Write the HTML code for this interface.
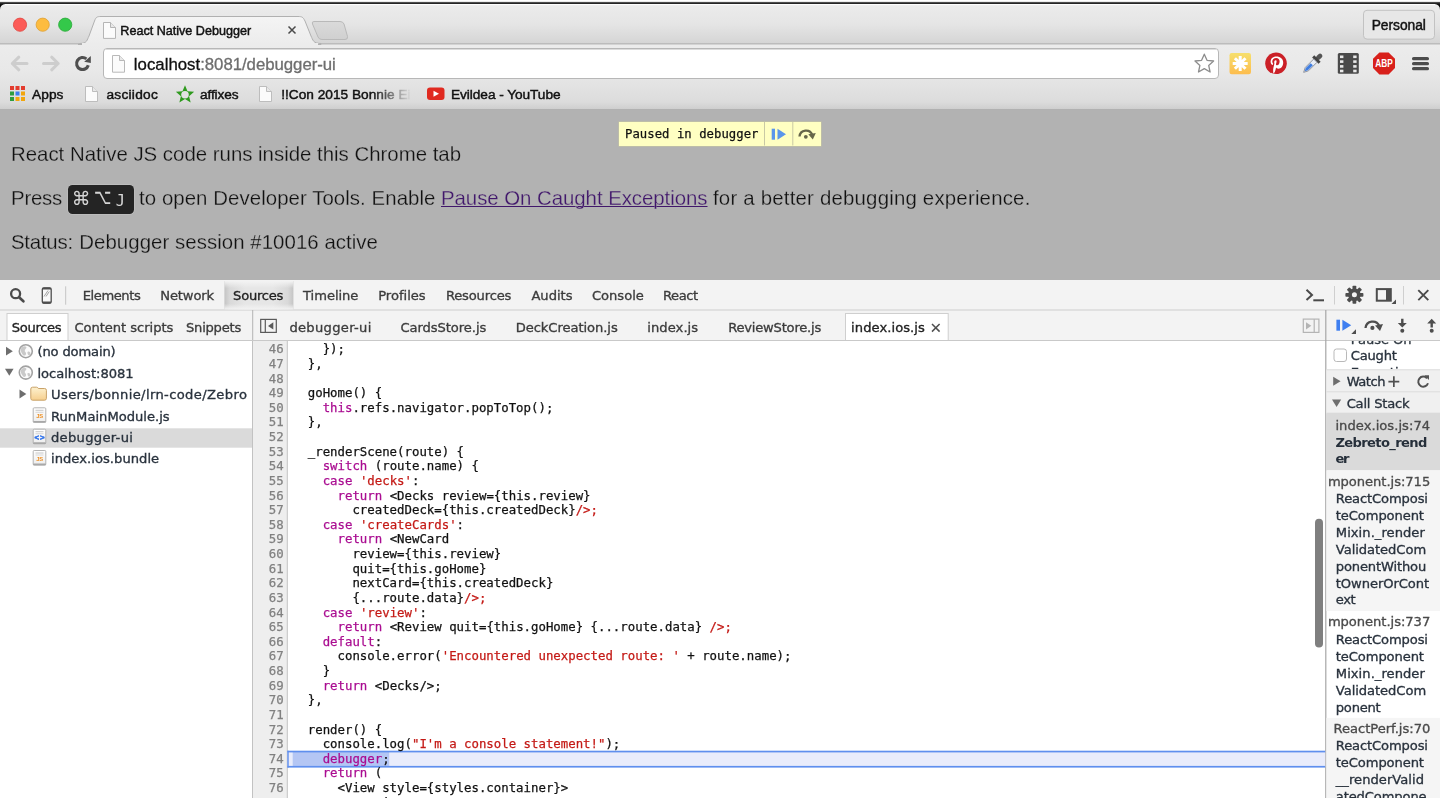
<!DOCTYPE html>
<html>
<head>
<meta charset="utf-8">
<title>React Native Debugger</title>
<style>
html,body{margin:0;padding:0;}

body{width:1440px;height:798px;overflow:hidden;position:relative;background:#b2b2b2;font-family:"Liberation Sans",sans-serif;}
.abs{position:absolute;}
#chrome{position:absolute;left:0;top:0;width:1440px;height:110px;background:linear-gradient(#fff 0,#fff 1.400px,#5a5a5a 2.200px,#2e2e2e 3.200px,#151515 4px,#000 6px);}
#chromebg{position:absolute;left:0;top:3.700px;width:1440px;height:106.300px;border-radius:5.500px 5.500px 0 0;
 background:linear-gradient(#fdfdfd 0,#fbfbfb 1px,#ebebeb 1.600px,#e5e5e5 20px,#d5d5d5 39.300px,#ececec 40.300px,#e8e8e8 68px,#dcdcdc 98px,#cfcfcf 104.800px,#a4a4a4 105.800px);}
.ui{font-family:"DejaVu Sans","Liberation Sans",sans-serif;-webkit-text-stroke:0.330px currentColor;}
.sn{font-family:"Liberation Sans",sans-serif;}
.mono{font-family:"DejaVu Sans Mono","Liberation Mono",monospace;-webkit-text-stroke:0.250px currentColor;}
.t{position:absolute;white-space:pre;}
#txt{position:absolute;left:0;top:0;width:1440px;height:798px;will-change:transform;}
.k{color:#aa0d91}.s{color:#c41a16}
#code{position:absolute;left:292.900px;top:342.300px;font-size:12.370px;line-height:14.630px;color:#111;white-space:pre;margin:0;}
#nums{position:absolute;left:253px;top:342.300px;width:30.700px;text-align:right;font-size:12.370px;line-height:14.630px;color:#808080;white-space:pre;margin:0;}
</style>
</head>
<body>
<div id="chrome"><div id="chromebg"></div></div>
<!-- tab strip -->
<svg class="abs" style="left:0;top:0" width="1440" height="110" viewBox="0 0 1440 110">
 <defs>
  <linearGradient id="tabg" x1="0" y1="0" x2="0" y2="1"><stop offset="0" stop-color="#f4f4f4"/><stop offset="1" stop-color="#ececec"/></linearGradient>
  <linearGradient id="yelg" x1="0" y1="0" x2="0" y2="1"><stop offset="0" stop-color="#f6df6c"/><stop offset="1" stop-color="#fdbd4e"/></linearGradient>
  <linearGradient id="ntg" x1="0" y1="0" x2="0" y2="1"><stop offset="0" stop-color="#dadada"/><stop offset="1" stop-color="#d0d0d0"/></linearGradient>
 </defs>
 <!-- toolbar top line -->
 <rect x="0" y="43.300" width="1440" height="1.100" fill="#b0b0b0"/>
 <!-- new tab button -->
 <path d="M314 21.5 H340 Q343 21.5 344 24 L347.500 36.500 Q348 39.500 345 39.500 H322 Q319 39.500 318 37 L312.500 24 Q311.500 21.500 314 21.500Z" fill="url(#ntg)" stroke="#b9b9b9" stroke-width="1"/>
 <!-- active tab -->
 <path d="M80 43.500 C87 43.500 87 40 89 36 L94.500 21 C96 17 97 16.500 101 16.500 H298 C302 16.500 303 17 305 21 L311 36 C313 40 313 43.500 321 43.500 V44.500 H78Z" fill="url(#tabg)" stroke="#b0b0b0" stroke-width="1"/>
 <rect x="82" y="43" width="236" height="2" fill="#ececec"/>
 <!-- traffic lights -->
 <circle cx="20" cy="24.700" r="6.600" fill="#fc5b57" stroke="#e0443e" stroke-width="0.800"/>
 <circle cx="42.700" cy="24.700" r="6.600" fill="#fdbc40" stroke="#dea032" stroke-width="0.800"/>
 <circle cx="65.200" cy="24.700" r="6.600" fill="#34c84a" stroke="#27aa35" stroke-width="0.800"/>
 <!-- tab favicon (page) -->
 <g id="pg1" transform="translate(103,22)"><path d="M0.500 0.500 H7.500 L12.500 5.500 V16.400 H0.500Z" fill="#fbfbfb" stroke="#b5b5b5"/><path d="M7.500 0.500 V5.500 H12.500" fill="#e8e8e8" stroke="#b5b5b5"/></g>
 <!-- tab close -->
 <path d="M288.500 26.500 L295.500 33.500 M295.500 26.500 L288.500 33.500" stroke="#4a4a4a" stroke-width="1.500" fill="none"/>
 <!-- back / forward / reload -->
 <path d="M12.300 63.500 H27 M18.800 57.200 L12.300 63.500 L18.800 69.800" stroke="#cdcdcd" stroke-width="3" fill="none" stroke-linecap="round" stroke-linejoin="round"/>
 <path d="M43.500 63.500 H58.200 M51.700 57.200 L58.200 63.500 L51.700 69.800" stroke="#cdcdcd" stroke-width="3" fill="none" stroke-linecap="round" stroke-linejoin="round"/>
 <path d="M86.400 58.900 A6 6 0 1 0 88.300 65.300" stroke="#4f4f4f" stroke-width="3.100" fill="none"/>
 <path d="M84.200 61.800 L90.800 56 V62.900Z" fill="#4f4f4f"/>
 <!-- omnibox -->
 <rect x="103.500" y="48.500" width="1115" height="30" rx="3.500" fill="#fff" stroke="#b7b7b7"/>
 <rect x="105" y="49" width="1112" height="1" fill="#dcdcdc"/>
 <g transform="translate(112,55)"><path d="M0.500 0.500 H7.500 L12.500 5.500 V17.200 H0.500Z" fill="#fbfbfb" stroke="#b9b9b9"/><path d="M7.500 0.500 V5.500 H12.500" fill="#e8e8e8" stroke="#b9b9b9"/></g>
 <!-- star -->
 <path d="M1204.300 54.200 L1207 60.300 L1213.600 61 L1208.700 65.400 L1210.100 72 L1204.300 68.600 L1198.500 72 L1199.900 65.400 L1195 61 L1201.600 60.300Z" fill="#fff" stroke="#8d8d8d" stroke-width="1.300" stroke-linejoin="round"/>
 <!-- ext: yellow asterisk -->
 <rect x="1229.500" y="53" width="21.500" height="21.200" rx="2.200" fill="url(#yelg)"/>
 <g stroke="#fff" stroke-width="3" stroke-linecap="butt"><path d="M1240.200 56 V71 M1232.700 63.500 H1247.700 M1234.900 58.200 L1245.500 68.800 M1245.500 58.200 L1234.900 68.800"/></g><circle cx="1240.200" cy="63.500" r="3.400" fill="#fff"/>
 <!-- ext: pinterest -->
 <circle cx="1276" cy="63.300" r="10.800" fill="#cb2027"/>
 <path d="M1276.400 56.500 C1272.600 56.500 1270.600 59 1270.600 61.700 C1270.600 63 1271.300 64.500 1272.400 65 C1272.700 65.100 1272.800 64.900 1272.800 64.700 L1273.100 63.700 C1272.500 63 1272.300 62.400 1272.300 61.600 C1272.300 59.600 1273.800 58 1276.200 58 C1278.300 58 1279.600 59.300 1279.600 61.200 C1279.600 63.600 1278.500 65.300 1277.100 65.300 C1276.300 65.300 1275.800 64.700 1276 63.900 C1276.200 63 1276.600 62 1276.600 61.400 C1276.600 60.800 1276.300 60.300 1275.600 60.300 C1274.800 60.300 1274.200 61.100 1274.200 62.200 C1274.200 62.900 1274.400 63.400 1274.400 63.400 L1273.300 68.200 C1273 69.500 1273.200 72 1273.300 73.200 L1274 73.200 C1274.500 72.400 1275.300 70.800 1275.500 69.900 L1276.100 67.600 C1276.400 68.200 1277.300 68.700 1278.300 68.700 C1281.200 68.700 1283.200 66 1283.200 62.500 C1283.200 59 1280.300 56.500 1276.400 56.500Z" fill="#fff"/>
 <!-- ext: eyedropper -->
 <g transform="translate(1312.500,63.500) rotate(45)"><rect x="-2.300" y="-13" width="4.600" height="7" rx="2.200" fill="#555"/><rect x="-4.500" y="-7" width="9" height="3" fill="#444"/><path d="M-2.300 -4 H2.300 V8 L0 12.500 L-2.300 8Z" fill="#e9eef7" stroke="#8a8f99" stroke-width="0.900"/><path d="M-1.500 1 H1.500 V8 L0 11 L-1.500 8Z" fill="#3f7de0"/></g>
 <!-- ext: film -->
 <rect x="1337.800" y="53" width="21" height="20.800" rx="1.500" fill="#4a4a4a"/>
 <g fill="#e9e9e9"><rect x="1340" y="55.500" width="3.400" height="2.600"/><rect x="1340" y="60.300" width="3.400" height="2.600"/><rect x="1340" y="65.100" width="3.400" height="2.600"/><rect x="1340" y="69.700" width="3.400" height="2.600"/><rect x="1353.200" y="55.500" width="3.400" height="2.600"/><rect x="1353.200" y="60.300" width="3.400" height="2.600"/><rect x="1353.200" y="65.100" width="3.400" height="2.600"/><rect x="1353.200" y="69.700" width="3.400" height="2.600"/></g>
 <!-- ext: ABP -->
 <path d="M1379.400 52.400 H1388.600 L1395 58.800 V68 L1388.600 74.400 H1379.400 L1373 68 V58.800Z" fill="#d8201b"/>
 <text x="1384" y="67.400" text-anchor="middle" font-family="Liberation Sans, sans-serif" font-weight="bold" font-size="10.500" fill="#fff" textLength="17.500" lengthAdjust="spacingAndGlyphs">ABP</text>
 <!-- hamburger -->
 <g fill="#4b4b4b"><rect x="1412" y="57" width="17" height="3.300" rx="1.600"/><rect x="1412" y="62" width="17" height="3.300" rx="1.600"/><rect x="1412" y="67" width="17" height="3.300" rx="1.600"/></g>
 <!-- personal button -->
 <rect x="1363.500" y="10.300" width="71" height="28.800" rx="3.500" fill="#e7e7e7" stroke="#c2c2c2"/>
 <!-- bookmarks icons -->
 <g><rect x="10" y="86" width="4" height="4" fill="#e33b2e"/><rect x="15.500" y="86" width="4" height="4" fill="#e33b2e"/><rect x="21" y="86" width="4" height="4" fill="#e33b2e"/>
    <rect x="10" y="91.500" width="4" height="4" fill="#2d9d3f"/><rect x="15.500" y="91.500" width="4" height="4" fill="#3b7ded"/><rect x="21" y="91.500" width="4" height="4" fill="#f2a60d"/>
    <rect x="10" y="97" width="4" height="4" fill="#2d9d3f"/><rect x="15.500" y="97" width="4" height="4" fill="#f2a60d"/><rect x="21" y="97" width="4" height="4" fill="#f2a60d"/></g>
 <g transform="translate(85,86)"><path d="M0.500 0.500 H7.500 L12.500 5.500 V15.500 H0.500Z" fill="#fbfbfb" stroke="#bdbdbd"/><path d="M7.500 0.500 V5.500 H12.500" fill="#e8e8e8" stroke="#bdbdbd"/></g>
 <g transform="translate(259,86)"><path d="M0.500 0.500 H7.500 L12.500 5.500 V15.500 H0.500Z" fill="#fbfbfb" stroke="#bdbdbd"/><path d="M7.500 0.500 V5.500 H12.500" fill="#e8e8e8" stroke="#bdbdbd"/></g>
 <path d="M185.00 85.20 L187.53 91.32 L194.13 91.83 L189.09 96.13 L190.64 102.57 L185.00 99.10 L179.36 102.57 L180.91 96.13 L175.87 91.83 L182.47 91.32Z" fill="#2e9a1e"/><circle cx="185" cy="94.800" r="3.800" fill="#e1e1e1"/>
 <rect x="427" y="87.500" width="17.500" height="12.500" rx="3" fill="#e02a20"/>
 <path d="M433.500 90.700 L439 93.750 L433.500 96.800Z" fill="#fff"/>
</svg>

<div class="abs" style="left:67.500px;top:184.500px;width:66px;height:29px;border-radius:4.500px;background:#242424;box-shadow:0 0 0 0.700px rgba(200,200,200,0.600);"></div>
<div class="abs" style="left:619px;top:122px;width:202px;height:23.500px;background:#ffffc2;box-shadow:0 0 0 0.500px #c8c8a0;"></div>
<svg class="abs" style="left:0;top:110px" width="1440" height="170" viewBox="0 110 1440 170">
 <rect x="764" y="122" width="1" height="23.500" fill="#c9c9a4"/>
 <rect x="792.300" y="122" width="1" height="23.500" fill="#c9c9a4"/>
 <rect x="771.700" y="128.700" width="3.300" height="11" fill="#5a96ea"/>
 <path d="M777.500 128.700 L786 134.200 L777.500 139.700Z" fill="#5a96ea"/>
 <path d="M799.500 136.500 A6.600 6.600 0 0 1 812.300 135" fill="none" stroke="#66664a" stroke-width="2.300"/>
 <path d="M808.300 134.200 L815.800 133 L812.800 139.600Z" fill="#66664a"/>
 <circle cx="805.800" cy="136.800" r="1.900" fill="#66664a"/>
</svg>

<svg class="abs" style="left:0;top:280px" width="1440" height="518" viewBox="0 280 1440 518">
 <defs>
  <linearGradient id="seltab" x1="0" y1="0" x2="1" y2="0"><stop offset="0" stop-color="#c4c4c4"/><stop offset="0.080" stop-color="#d9d9d9"/><stop offset="0.300" stop-color="#e6e6e6"/><stop offset="0.700" stop-color="#e6e6e6"/><stop offset="0.920" stop-color="#d9d9d9"/><stop offset="1" stop-color="#c4c4c4"/></linearGradient>
  <linearGradient id="seltabv" x1="0" y1="0" x2="0" y2="1"><stop offset="0" stop-color="#f3f3f3" stop-opacity="1"/><stop offset="0.250" stop-color="#f3f3f3" stop-opacity="0"/><stop offset="0.800" stop-color="#f3f3f3" stop-opacity="0"/><stop offset="1" stop-color="#f3f3f3" stop-opacity="1"/></linearGradient>
  <linearGradient id="foldg" x1="0" y1="0" x2="0" y2="1"><stop offset="0" stop-color="#fdf1cf"/><stop offset="1" stop-color="#f6cf8e"/></linearGradient>
  <linearGradient id="fileg" x1="0" y1="0" x2="0" y2="1"><stop offset="0" stop-color="#ffffff"/><stop offset="1" stop-color="#ececec"/></linearGradient>
  <g id="globe"><circle cx="0" cy="0" r="6.500" fill="#fbfbfb" stroke="#a2a2a2" stroke-width="1.600"/><path d="M-4.800 -2.500 C-3.500 -5 -0.500 -5.500 0.500 -4.200 C1.200 -3 -0.500 -2.500 -1 -1 C-1.500 0.500 0.500 0.800 0.300 2.500 C0 4.500 -2 5 -3 3.500 C-4 2 -5.500 0 -4.800 -2.500Z M2 0.500 C3.500 0 5 1 4.500 2.800 C4 4.300 2.500 4.500 2 3 C1.700 2 1.300 1 2 0.500Z" fill="#c9c9c9"/></g>
  <g id="jsfile"><rect x="0.700" y="0.500" width="12.600" height="14.600" rx="1" fill="url(#fileg)" stroke="#b3b3b3"/><rect x="0.700" y="13.600" width="12.600" height="1.600" rx="0.500" fill="#a8a8a8"/><rect x="3" y="2.500" width="8" height="1" fill="#c8c8c8"/><rect x="3" y="4.500" width="8" height="1" fill="#d8d8d8"/></g>
 </defs>
 <rect x="0" y="280" width="1440" height="518" fill="#fff"/>
 <rect x="0" y="280" width="1440" height="60.500" fill="#f3f3f3"/>
 <!-- borders -->
 <rect x="0" y="309.500" width="1440" height="1" fill="#cdcdcd"/>
 <rect x="0" y="340" width="1440" height="1" fill="#c9c9c9"/>
 <!-- sidebar selected row -->
 <rect x="0" y="428.300" width="252" height="19.400" fill="#dadada"/>
 <!-- splitters -->
 <rect x="252.200" y="310" width="1" height="488" fill="#b3b3b3"/>
 <rect x="253.200" y="341" width="34" height="457" fill="#eeeeee"/>
 <rect x="286.800" y="341" width="1" height="457" fill="#c2c2c2"/>
 <rect x="1325.200" y="310" width="1.200" height="488" fill="#a6a6a6"/>
 <!-- right sidebar backgrounds -->
 <rect x="1326.400" y="369.500" width="114" height="44" fill="#f0f0f0"/>
 <rect x="1326.400" y="369.300" width="114" height="1" fill="#dcdcdc"/>
 <rect x="1326.400" y="391.300" width="114" height="1" fill="#dcdcdc"/>
 <rect x="1326.400" y="412.700" width="114" height="57.700" fill="#dadada"/>
 <rect x="1326.400" y="470.400" width="114" height="140.600" fill="#f5f5f5"/>
 <rect x="1326.400" y="717.900" width="114" height="81" fill="#f5f5f5"/>
 <!-- debugger line highlight -->
 <rect x="287.500" y="751.500" width="1037.700" height="15.500" fill="#e9ecfb"/>
 <rect x="292.700" y="752" width="96.500" height="14.500" fill="#b4c6f4"/>
 <rect x="287.500" y="750.700" width="1037.700" height="1.700" fill="#5f8fee"/>
 <rect x="287.500" y="765.900" width="1037.700" height="1.700" fill="#5f8fee"/>
 <rect x="287.300" y="750.700" width="1.400" height="16.900" fill="#5f8fee"/>
 <!-- code scrollbar thumb -->
 <rect x="1315" y="518.800" width="8" height="128.700" rx="4" fill="#7f7f7f"/>
 <!-- main toolbar: active tab -->
 <rect x="224.400" y="281" width="69" height="28.500" fill="url(#seltab)"/>
 <rect x="224.400" y="281" width="69" height="28.500" fill="url(#seltabv)"/>
 <!-- search icon -->
 <circle cx="15.600" cy="293.700" r="4.500" fill="none" stroke="#4a4a4a" stroke-width="2.300"/>
 <path d="M19.300 297.600 L23.400 301.300" stroke="#4a4a4a" stroke-width="2.700" stroke-linecap="round"/>
 <!-- device icon -->
 <rect x="42.300" y="288" width="8.900" height="15.200" rx="1.400" fill="#f8f8f8" stroke="#4e4e4e" stroke-width="1.300"/>
 <path d="M42.300 289.300 Q42.300 287.400 44.200 287.400 H49.300 Q51.200 287.400 51.200 289.300 V289.600 H42.300Z" fill="#4e4e4e"/>
 <path d="M42.300 301.400 H51.200 V301.900 Q51.200 303.800 49.300 303.800 H44.200 Q42.300 303.800 42.300 301.900Z" fill="#4e4e4e"/>
 <path d="M44 296.500 L48 290.500 M46 296.500 L49.300 291.500" stroke="#8a8a8a" stroke-width="0.800"/>
 <rect x="65" y="286.300" width="1.200" height="18.400" fill="#cdcdcd"/>
 <!-- right icons -->
 <path d="M1306.500 289.800 L1312 294.900 L1306.500 300" fill="none" stroke="#4a4a4a" stroke-width="2"/>
 <rect x="1313.300" y="299.300" width="10.700" height="2" fill="#4a4a4a"/>
 <rect x="1334" y="286" width="1" height="18.500" fill="#cfcfcf"/>
 <g transform="translate(1354.400,294.800)" fill="#4d4d4d">
  <g id="teeth"><rect x="-1.900" y="-9" width="3.800" height="18" rx="0.800"/><rect x="-1.900" y="-9" width="3.800" height="18" rx="0.800" transform="rotate(45)"/><rect x="-1.900" y="-9" width="3.800" height="18" rx="0.800" transform="rotate(90)"/><rect x="-1.900" y="-9" width="3.800" height="18" rx="0.800" transform="rotate(135)"/></g>
  <circle r="6.300"/><circle r="2.500" fill="#f3f3f3"/>
 </g>
 <rect x="1376.800" y="289.100" width="14" height="11.600" fill="none" stroke="#4d4d4d" stroke-width="2"/>
 <rect x="1386" y="289.100" width="4.800" height="11.600" fill="#4d4d4d"/>
 <path d="M1396 299.500 V304 H1391.500Z" fill="#4d4d4d"/>
 <rect x="1403" y="286" width="1" height="18.500" fill="#cfcfcf"/>
 <path d="M1418.300 290.200 L1428.300 300.200 M1428.300 290.200 L1418.300 300.200" stroke="#4a4a4a" stroke-width="1.900"/>
 <!-- left sub-tab: Sources active -->
 <rect x="7" y="313.500" width="61" height="27" fill="#fff" stroke="#cfcfcf"/>
 <!-- editor tabs -->
 <rect x="260.700" y="319.400" width="15.600" height="13" fill="none" stroke="#5a5a5a" stroke-width="1.200"/>
 <rect x="264.700" y="319.400" width="1.200" height="13" fill="#5a5a5a"/>
 <path d="M273.300 322.300 V329.500 L268 325.900Z" fill="#5a5a5a"/>
 <rect x="845.500" y="313.500" width="102.700" height="27" fill="#fff" stroke="#cfcfcf"/>
 <path d="M932 324 L939.600 331.600 M939.600 324 L932 331.600" stroke="#4f4f4f" stroke-width="1.500"/>
 <rect x="1303.300" y="319.100" width="15.600" height="13.300" fill="none" stroke="#b4b4b4" stroke-width="1.200"/>
 <rect x="1313.600" y="319.100" width="1.200" height="13.300" fill="#b4b4b4"/>
 <path d="M1306 322.200 V329.400 L1311.300 325.800Z" fill="#b4b4b4"/>
 <!-- debugger controls -->
 <rect x="1336.400" y="319.700" width="3.600" height="11" fill="#3f7ff0"/>
 <path d="M1342.400 319.700 L1351.200 325.200 L1342.400 330.700Z" fill="#3f7ff0"/>
 <path d="M1356 329.300 V334 H1351.300Z" fill="#4d4d4d"/>
 <path d="M1365.500 328 A7.200 7.200 0 0 1 1379.300 326" fill="none" stroke="#4d4d4d" stroke-width="2.300"/>
 <path d="M1375 325.500 L1383 324 L1380 331Z" fill="#4d4d4d"/>
 <circle cx="1372.400" cy="327.900" r="2.100" fill="#4d4d4d"/>
 <path d="M1401.100 318.800 H1403.500 V323 H1406.800 L1402.300 327.600 L1397.800 323 H1401.100Z" fill="#4d4d4d"/>
 <circle cx="1402.300" cy="330.800" r="2" fill="#4d4d4d"/>
 <path d="M1430.500 327.600 H1432.900 V323.400 H1436.200 L1431.700 318.800 L1427.200 323.400 H1430.500Z" fill="#4d4d4d"/>
 <circle cx="1431.700" cy="330.800" r="2" fill="#4d4d4d"/>
 <!-- tree icons -->
 <path d="M6 346.800 L12.800 351.200 L6 355.600Z" fill="#6e6e6e"/>
 <use href="#globe" x="25.800" y="351.200"/>
 <path d="M5 368.800 H13.600 L9.300 375.800Z" fill="#6e6e6e"/>
 <use href="#globe" x="25.800" y="372.600"/>
 <path d="M19.500 389.600 L26.300 394 L19.500 398.400Z" fill="#6e6e6e"/>
 <path d="M30.800 389 Q30.800 387.200 32.600 387.200 H36.600 Q37.800 387.200 38.300 388.500 H44.600 Q46.400 388.500 46.400 390.300 V398.400 Q46.400 400.200 44.600 400.200 H32.600 Q30.800 400.200 30.800 398.400Z" fill="url(#foldg)" stroke="#c9a268" stroke-width="1"/>
 <use href="#jsfile" x="32.500" y="407.300"/>
 <use href="#jsfile" x="32.500" y="428.700"/>
 <use href="#jsfile" x="32.500" y="450"/>
 <!-- watch / callstack icons -->
 <path d="M1333.200 376.800 L1340.600 381.300 L1333.200 385.800Z" fill="#6e6e6e"/>
 <path d="M1332 399.500 H1341.200 L1336.600 407Z" fill="#6e6e6e"/>
 <path d="M1388.400 381.600 H1399.300 M1393.850 376.200 V387" stroke="#505050" stroke-width="1.700"/>
 <path d="M1427 378.300 A5 5 0 1 0 1428 383.200" fill="none" stroke="#505050" stroke-width="2"/>
 <path d="M1424.300 375.200 H1429 V380Z" fill="#555"/>
 <rect x="0" y="340" width="1325" height="1" fill="#c9c9c9"/>
 <!-- checkbox -->
 <rect x="1334" y="349" width="12.500" height="12.500" rx="2.500" fill="#fff" stroke="#b9b9b9"/>
</svg>
<div id="txt">
<pre id="nums" class="mono">46
47
48
49
50
51
52
53
54
55
56
57
58
59
60
61
62
63
64
65
66
67
68
69
70
71
72
73
74
75
76
77</pre>
<pre id="code" class="mono">    });
  },

  goHome() {
    <span class="k">this</span>.refs.navigator.popToTop();
  },

  _renderScene(route) {
    <span class="k">switch</span> (route.name) {
    <span class="k">case</span> <span class="s">'decks'</span>:
      <span class="k">return</span> &lt;Decks review={this.review}
        createdDeck={this.createdDeck}<span class="s">/&gt;;</span>
    <span class="k">case</span> <span class="s">'createCards'</span>:
      <span class="k">return</span> &lt;NewCard
        review={this.review}
        quit={this.goHome}
        nextCard={this.createdDeck}
        {...route.data}<span class="s">/&gt;;</span>
    <span class="k">case</span> <span class="s">'review'</span>:
      <span class="k">return</span> &lt;Review quit={this.goHome} {...route.data} <span class="s">/&gt;;</span>
    <span class="k">default</span>:
      console.error(<span class="s">'Encountered unexpected route: '</span> + route.name);
    }
    <span class="k">return</span> &lt;Decks/&gt;;
  },

  render() {
    console.log(<span class="s">"I'm a console statement!"</span>);
    <span class="k">debugger</span>;
    <span class="k">return</span> (
      &lt;View style={styles.container}&gt;
        &lt;Navigator</pre>
<div class="abs" style="left:1327px;top:341px;width:113px;height:28.300px;overflow:hidden;">
<div class="t ui" style="left:23.700px;top:-10.300px;font-size:13.100px;line-height:17px;color:#303942;letter-spacing:-0.050px;">Pause On</div>
<div class="t ui" style="left:23.700px;top:22.600px;font-size:13.100px;line-height:17px;color:#29323d;letter-spacing:-0.050px;">Exceptions</div>
</div>
<div class="t sn" style="left:120.3px;top:22.83px;font-size:12.6px;line-height:16px;color:#111;letter-spacing:-0.005px;-webkit-text-stroke:0.450px currentColor;">React Native Debugger</div>
<div class="t sn" style="left:133.8px;top:53.88px;font-size:16.8px;line-height:22px;color:#111;letter-spacing:0.018px;-webkit-text-stroke:0.300px currentColor;">localhost</div>
<div class="t sn" style="left:200.2px;top:53.88px;font-size:16.8px;line-height:22px;color:#6e6e6e;letter-spacing:-0.037px;-webkit-text-stroke:0.300px currentColor;">:8081/debugger-ui</div>
<div class="t sn" style="left:1371.7px;top:17.12px;font-size:13.8px;line-height:18px;color:#111;letter-spacing:-0.034px;-webkit-text-stroke:0.450px currentColor;">Personal</div>
<div class="t sn" style="left:32.0px;top:85.50px;font-size:13.7px;line-height:18px;color:#111;letter-spacing:0.074px;-webkit-text-stroke:0.450px currentColor;">Apps</div>
<div class="t sn" style="left:106.5px;top:85.50px;font-size:13.7px;line-height:18px;color:#111;letter-spacing:0.256px;-webkit-text-stroke:0.450px currentColor;">asciidoc</div>
<div class="t sn" style="left:200.0px;top:85.50px;font-size:13.7px;line-height:18px;color:#111;letter-spacing:-0.130px;-webkit-text-stroke:0.450px currentColor;">affixes</div>
<div class="t sn" style="left:281.2px;top:85.50px;font-size:13.7px;line-height:18px;color:#111;-webkit-text-stroke:0.450px currentColor;width:131px;overflow:hidden;-webkit-mask-image:linear-gradient(90deg,#000 0,#000 92px,rgba(0,0,0,0.100) 126px,transparent 131px);mask-image:linear-gradient(90deg,#000 0,#000 92px,rgba(0,0,0,0.100) 126px,transparent 131px);">!!Con 2015 Bonnie Ei</div>
<div class="t sn" style="left:451.0px;top:85.50px;font-size:13.7px;line-height:18px;color:#111;letter-spacing:-0.065px;-webkit-text-stroke:0.450px currentColor;">Evildea - YouTube</div>
<div class="t sn" style="left:11.0px;top:141.43px;font-size:20.4px;line-height:27px;color:#111;letter-spacing:0.001px;-webkit-text-stroke:0.260px #b2b2b2;">React Native JS code runs inside this Chrome tab</div>
<div class="t sn" style="left:11.0px;top:185.23px;font-size:20.4px;line-height:27px;color:#111;letter-spacing:-0.225px;-webkit-text-stroke:0.260px #b2b2b2;">Press</div>
<div class="t sn" style="left:139.0px;top:185.23px;font-size:20.4px;line-height:27px;color:#111;letter-spacing:0.069px;-webkit-text-stroke:0.260px #b2b2b2;">to open Developer Tools. Enable</div>
<div class="t sn" style="left:441.0px;top:185.23px;font-size:20.4px;line-height:27px;color:#41176b;letter-spacing:-0.039px;-webkit-text-stroke:0.260px #b2b2b2;text-decoration:underline;text-decoration-color:#41176b;text-decoration-thickness:1.100px;text-underline-offset:0.600px;text-decoration-skip-ink:none;">Pause On Caught Exceptions</div>
<div class="t sn" style="left:713.0px;top:185.23px;font-size:20.4px;line-height:27px;color:#111;letter-spacing:0.203px;-webkit-text-stroke:0.260px #b2b2b2;">for a better debugging experience.</div>
<div class="t sn" style="left:11.0px;top:229.33px;font-size:20.4px;line-height:27px;color:#111;letter-spacing:-0.226px;-webkit-text-stroke:0.260px #b2b2b2;">Status:</div>
<div class="t sn" style="left:79.3px;top:229.33px;font-size:20.4px;line-height:27px;color:#111;letter-spacing:0.057px;-webkit-text-stroke:0.260px #b2b2b2;">Debugger session #10016 active</div>
<div class="t ui" style="left:71.8px;top:187.40px;font-size:18.8px;line-height:24px;color:#d4d4d4;-webkit-text-stroke:0;">⌘</div>
<div class="t ui" style="left:94.3px;top:183.26px;font-size:21.5px;line-height:28px;color:#d4d4d4;-webkit-text-stroke:0;transform:scaleX(0.700);transform-origin:0 0;">⌥</div>
<div class="t mono" style="left:115.7px;top:190.94px;font-size:15.2px;line-height:20px;color:#d8d8d8;letter-spacing:0.544px;-webkit-text-stroke:0;">J</div>
<div class="t mono" style="left:625.0px;top:126.26px;font-size:12.25px;line-height:16px;color:#111;letter-spacing:0.041px;">Paused in debugger</div>
<div class="t sn" style="left:36.3px;top:412.19px;font-size:5.8px;line-height:8px;color:#ee8f22;font-weight:700;letter-spacing:-0.347px;">JS</div>
<div class="t sn" style="left:34.4px;top:433.40px;font-size:7.8px;line-height:10px;color:#2f72ea;font-weight:700;letter-spacing:0.945px;-webkit-text-stroke:0.500px #2f72ea;">&lt;&gt;</div>
<div class="t sn" style="left:36.3px;top:454.89px;font-size:5.8px;line-height:8px;color:#ee8f22;font-weight:700;letter-spacing:-0.347px;">JS</div>
<div class="t ui" style="left:82.7px;top:286.92px;font-size:13.1px;line-height:17px;color:#3c3c3c;letter-spacing:-0.418px;">Elements</div>
<div class="t ui" style="left:160.3px;top:286.92px;font-size:13.1px;line-height:17px;color:#3c3c3c;letter-spacing:-0.153px;">Network</div>
<div class="t ui" style="left:233.1px;top:286.92px;font-size:13.1px;line-height:17px;color:#222;letter-spacing:-0.257px;">Sources</div>
<div class="t ui" style="left:303.0px;top:286.92px;font-size:13.1px;line-height:17px;color:#3c3c3c;letter-spacing:-0.036px;">Timeline</div>
<div class="t ui" style="left:378.2px;top:286.92px;font-size:13.1px;line-height:17px;color:#3c3c3c;letter-spacing:-0.006px;">Profiles</div>
<div class="t ui" style="left:445.9px;top:286.92px;font-size:13.1px;line-height:17px;color:#3c3c3c;letter-spacing:-0.175px;">Resources</div>
<div class="t ui" style="left:531.4px;top:286.92px;font-size:13.1px;line-height:17px;color:#3c3c3c;letter-spacing:0.005px;">Audits</div>
<div class="t ui" style="left:591.9px;top:286.92px;font-size:13.1px;line-height:17px;color:#3c3c3c;letter-spacing:0.002px;">Console</div>
<div class="t ui" style="left:662.9px;top:286.92px;font-size:13.1px;line-height:17px;color:#3c3c3c;letter-spacing:-0.404px;">React</div>
<div class="t ui" style="left:11.7px;top:318.87px;font-size:13.1px;line-height:17px;color:#222;letter-spacing:-0.300px;">Sources</div>
<div class="t ui" style="left:74.4px;top:318.87px;font-size:13.1px;line-height:17px;color:#3c3c3c;letter-spacing:-0.043px;">Content scripts</div>
<div class="t ui" style="left:186.0px;top:318.87px;font-size:13.1px;line-height:17px;color:#3c3c3c;letter-spacing:-0.236px;">Snippets</div>
<div class="t ui" style="left:289.4px;top:318.87px;font-size:13.1px;line-height:17px;color:#3c3c3c;letter-spacing:0.302px;">debugger-ui</div>
<div class="t ui" style="left:400.4px;top:318.87px;font-size:13.1px;line-height:17px;color:#3c3c3c;letter-spacing:-0.061px;">CardsStore.js</div>
<div class="t ui" style="left:515.7px;top:318.87px;font-size:13.1px;line-height:17px;color:#3c3c3c;letter-spacing:-0.064px;">DeckCreation.js</div>
<div class="t ui" style="left:647.3px;top:318.87px;font-size:13.1px;line-height:17px;color:#3c3c3c;letter-spacing:0.056px;">index.js</div>
<div class="t ui" style="left:728.2px;top:318.87px;font-size:13.1px;line-height:17px;color:#3c3c3c;letter-spacing:-0.218px;">ReviewStore.js</div>
<div class="t ui" style="left:851.1px;top:318.87px;font-size:13.1px;line-height:17px;color:#222;letter-spacing:0.060px;">index.ios.js</div>
<div class="t ui" style="left:37.5px;top:343.47px;font-size:13.1px;line-height:17px;color:#29323d;letter-spacing:-0.158px;">(no domain)</div>
<div class="t ui" style="left:37.5px;top:364.87px;font-size:13.1px;line-height:17px;color:#29323d;letter-spacing:-0.030px;">localhost:8081</div>
<div class="t ui" style="left:51.0px;top:385.97px;font-size:13.1px;line-height:17px;color:#29323d;letter-spacing:0.368px;">Users/bonnie/lrn-code/Zebro</div>
<div class="t ui" style="left:51.0px;top:407.57px;font-size:13.1px;line-height:17px;color:#29323d;letter-spacing:0.006px;">RunMainModule.js</div>
<div class="t ui" style="left:51.0px;top:428.77px;font-size:13.1px;line-height:17px;color:#29323d;letter-spacing:0.302px;">debugger-ui</div>
<div class="t ui" style="left:51.0px;top:449.97px;font-size:13.1px;line-height:17px;color:#29323d;letter-spacing:0.042px;">index.ios.bundle</div>
<div class="t ui" style="left:1350.7px;top:346.97px;font-size:13.1px;line-height:17px;color:#29323d;letter-spacing:-0.186px;">Caught</div>
<div class="t ui" style="left:1346.7px;top:372.77px;font-size:13.1px;line-height:17px;color:#29323d;letter-spacing:-0.493px;">Watch</div>
<div class="t ui" style="left:1346.7px;top:395.07px;font-size:13.1px;line-height:17px;color:#29323d;letter-spacing:-0.206px;">Call Stack</div>
<div class="t ui" style="left:1335.4px;top:416.87px;font-size:13.1px;line-height:17px;color:#4a4a4a;letter-spacing:0.043px;">index.ios.js:74</div>
<div class="t ui" style="left:1335.4px;top:433.87px;font-size:13.1px;line-height:17px;color:#262f3a;font-weight:700;letter-spacing:-0.635px;-webkit-text-stroke:0;">Zebreto_rend</div>
<div class="t ui" style="left:1335.4px;top:450.47px;font-size:13.1px;line-height:17px;color:#262f3a;font-weight:700;letter-spacing:-1.222px;-webkit-text-stroke:0;">er</div>
<div class="t ui" style="left:1327.9px;top:473.17px;font-size:13.1px;line-height:17px;color:#4a4a4a;letter-spacing:-0.042px;">mponent.js:715</div>
<div class="t ui" style="left:1335.8px;top:489.77px;font-size:13.1px;line-height:17px;color:#29323d;letter-spacing:-0.127px;">ReactComposi</div>
<div class="t ui" style="left:1335.8px;top:506.72px;font-size:13.1px;line-height:17px;color:#29323d;letter-spacing:-0.102px;">teComponent</div>
<div class="t ui" style="left:1335.8px;top:523.67px;font-size:13.1px;line-height:17px;color:#29323d;letter-spacing:0.044px;">Mixin._render</div>
<div class="t ui" style="left:1335.8px;top:540.62px;font-size:13.1px;line-height:17px;color:#29323d;letter-spacing:-0.058px;">ValidatedCom</div>
<div class="t ui" style="left:1335.8px;top:557.57px;font-size:13.1px;line-height:17px;color:#29323d;letter-spacing:-0.155px;">ponentWithou</div>
<div class="t ui" style="left:1335.8px;top:574.52px;font-size:13.1px;line-height:17px;color:#29323d;letter-spacing:-0.073px;">tOwnerOrCont</div>
<div class="t ui" style="left:1335.8px;top:591.47px;font-size:13.1px;line-height:17px;color:#29323d;letter-spacing:-0.406px;">ext</div>
<div class="t ui" style="left:1327.9px;top:613.47px;font-size:13.1px;line-height:17px;color:#4a4a4a;letter-spacing:-0.042px;">mponent.js:737</div>
<div class="t ui" style="left:1335.8px;top:630.77px;font-size:13.1px;line-height:17px;color:#29323d;letter-spacing:-0.127px;">ReactComposi</div>
<div class="t ui" style="left:1335.8px;top:647.72px;font-size:13.1px;line-height:17px;color:#29323d;letter-spacing:-0.102px;">teComponent</div>
<div class="t ui" style="left:1335.8px;top:664.67px;font-size:13.1px;line-height:17px;color:#29323d;letter-spacing:0.044px;">Mixin._render</div>
<div class="t ui" style="left:1335.8px;top:681.62px;font-size:13.1px;line-height:17px;color:#29323d;letter-spacing:-0.058px;">ValidatedCom</div>
<div class="t ui" style="left:1335.8px;top:698.57px;font-size:13.1px;line-height:17px;color:#29323d;letter-spacing:-0.237px;">ponent</div>
<div class="t ui" style="left:1333.5px;top:720.27px;font-size:13.1px;line-height:17px;color:#4a4a4a;letter-spacing:-0.024px;">ReactPerf.js:70</div>
<div class="t ui" style="left:1335.8px;top:736.97px;font-size:13.1px;line-height:17px;color:#29323d;letter-spacing:-0.127px;">ReactComposi</div>
<div class="t ui" style="left:1335.8px;top:753.92px;font-size:13.1px;line-height:17px;color:#29323d;letter-spacing:-0.102px;">teComponent</div>
<div class="t ui" style="left:1335.8px;top:770.87px;font-size:13.1px;line-height:17px;color:#29323d;letter-spacing:0.026px;">__renderValid</div>
<div class="t ui" style="left:1335.8px;top:787.82px;font-size:13.1px;line-height:17px;color:#29323d;letter-spacing:-0.130px;">atedCompone</div>
</div>
</body>
</html>
